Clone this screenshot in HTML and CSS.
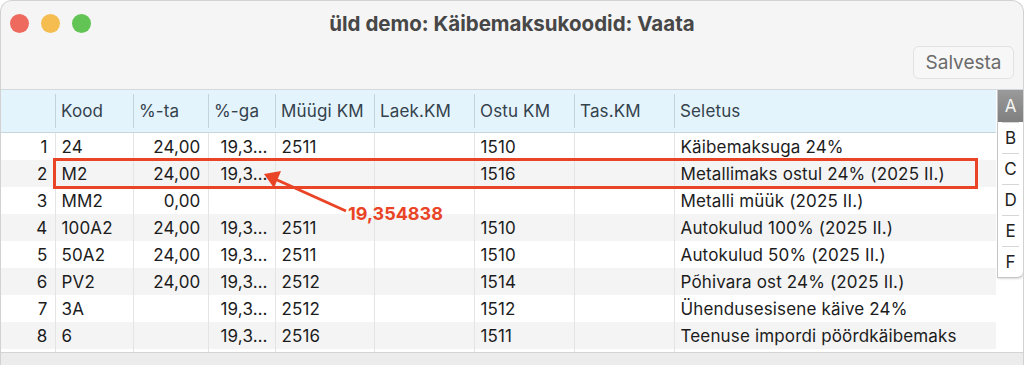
FILE: index.html
```html
<!DOCTYPE html>
<html lang="et">
<head>
  <meta charset="UTF-8">
  <title>üld demo: Käibemaksukoodid: Vaata</title>
  <link rel="stylesheet" href="styles.css">
</head>
<body>

  <div class="window">
    <!-- pealkirjariba -->
    <div class="titlebar">
      <div class="lights">
        <span class="light red"></span>
        <span class="light yellow"></span>
        <span class="light green"></span>
      </div>
      <div class="title">üld demo: Käibemaksukoodid: Vaata</div>
    </div>

    <!-- tööriistariba -->
    <div class="toolbar">
      <button class="save-btn">Salvesta</button>
    </div>

    <!-- tabel + tähed paremal -->
    <div class="content">
      <table class="grid">
        <colgroup>
          <col class="c-nr"><col class="c-kood"><col class="c-ta"><col class="c-ga">
          <col class="c-km"><col class="c-km2"><col class="c-km2"><col class="c-km2"><col>
        </colgroup>
        <thead>
          <tr>
            <th></th><th>Kood</th><th>%-ta</th><th>%-ga</th><th>Müügi KM</th>
            <th>Laek.KM</th><th>Ostu KM</th><th>Tas.KM</th><th>Seletus</th>
          </tr>
        </thead>
        <tbody>
          <tr><td class="nr">1</td><td>24</td><td class="num">24,00</td><td class="num">19,3…</td><td>2511</td><td></td><td>1510</td><td></td><td>Käibemaksuga 24%</td></tr>
          <tr><td class="nr">2</td><td>M2</td><td class="num">24,00</td><td class="num">19,3…</td><td></td><td></td><td>1516</td><td></td><td>Metallimaks ostul 24% (2025 II.)</td></tr>
          <tr><td class="nr">3</td><td>MM2</td><td class="num">0,00</td><td></td><td></td><td></td><td></td><td></td><td>Metalli müük (2025 II.)</td></tr>
          <tr><td class="nr">4</td><td>100A2</td><td class="num">24,00</td><td class="num">19,3…</td><td>2511</td><td></td><td>1510</td><td></td><td>Autokulud 100% (2025 II.)</td></tr>
          <tr><td class="nr">5</td><td>50A2</td><td class="num">24,00</td><td class="num">19,3…</td><td>2511</td><td></td><td>1510</td><td></td><td>Autokulud 50% (2025 II.)</td></tr>
          <tr><td class="nr">6</td><td>PV2</td><td class="num">24,00</td><td class="num">19,3…</td><td>2512</td><td></td><td>1514</td><td></td><td>Põhivara ost 24% (2025 II.)</td></tr>
          <tr><td class="nr">7</td><td>3A</td><td class="num"></td><td class="num">19,3…</td><td>2512</td><td></td><td>1512</td><td></td><td>Ühendusesisene käive 24%</td></tr>
          <tr><td class="nr">8</td><td>6</td><td class="num"></td><td class="num">19,3…</td><td>2516</td><td></td><td>1511</td><td></td><td>Teenuse impordi pöördkäibemaks</td></tr>
          <tr class="filler"><td></td><td></td><td></td><td></td><td></td><td></td><td></td><td></td><td></td></tr>
        </tbody>
      </table>

      <div class="tabs">
        <div class="tab active">A</div>
        <div class="tab">B</div>
        <div class="tab">C</div>
        <div class="tab">D</div>
        <div class="tab">E</div>
        <div class="tab">F</div>
      </div>
    </div>

    <div class="statusbar"></div>

    <!-- punane märge: kast, nool ja täisväärtus -->
    <svg class="note" width="1024" height="365" viewBox="0 0 1024 365">
      <rect x="54.5" y="159.5" width="922" height="28" fill="none" stroke="#ea4426" stroke-width="3"/>
      <line x1="346" y1="211" x2="275" y2="179" stroke="#ea4426" stroke-width="3"/>
      <polygon points="264,174 281,171 274,188" fill="#ea4426"/>
      <text x="348" y="220" class="note-text">19,354838</text>
    </svg>
  </div>

</body>
</html>
```

FILE: styles.css
```css
/* lehe põhi */
body {
  margin: 0;
  background: #fff;
  font-family: Inter, 'Liberation Sans', sans-serif;
  color: #1c1c1c;
}

/* aken */
.window {
  position: relative;
  width: 1024px;
  height: 365px;
  box-sizing: border-box;
  border: 1px solid #d2d2d2;
  border-bottom: none;
  border-radius: 12px 12px 0 0;
  background: #f5f5f5;
  overflow: hidden;
  display: flex;
  flex-direction: column;
}

.titlebar {
  height: 44px;
  display: flex;
  align-items: center;
  position: relative;
}

.lights {
  display: flex;
  gap: 12px;
  padding-left: 9px;
  padding-top: 1px;
}

.light {
  width: 19px;
  height: 19px;
  border-radius: 50%;
}

.red { background: #ee6a5f; }
.yellow { background: #f5bd4f; }
.green { background: #61c454; }

.title {
  position: absolute;
  left: 0;
  right: 0;
  text-align: center;
  font-size: 20.5px;
  font-weight: 700;
  color: #474747;
}

.toolbar {
  height: 44px;
  display: flex;
  justify-content: flex-end;
  align-items: flex-start;
  padding-right: 9px;
  border-bottom: 1px solid #d3d9dd;
}

.save-btn {
  margin-top: 1px;
  width: 101px;
  height: 33px;
  padding: 0;
  background: #f7f7f7;
  border: 1px solid #e2e2e2;
  border-radius: 6px;
  font-family: inherit;
  font-size: 19px;
  color: #6b6b6b;
}

/* tabel */
.content {
  display: flex;
  background: #fff;
  flex: 1;
  min-height: 0;
}

.grid {
  width: 996px;
  border-collapse: collapse;
  table-layout: fixed;
  font-size: 17px;
  letter-spacing: 0.15px;
  align-self: flex-start;
}

.c-nr { width: 54px; }
.c-kood { width: 78px; }
.c-ta { width: 75px; }
.c-ga { width: 67px; }
.c-km { width: 99px; }
.c-km2 { width: 100px; }

.grid th {
  height: 42px;
  padding: 0 6px;
  background: #e4f4fd;
  color: #34424c;
  font-weight: 400;
  text-align: left;
  white-space: nowrap;
  border-bottom: 1px solid #c9d5dc;
  background-image: linear-gradient(#c4d2db, #c4d2db);
  background-size: 1px 34px;
  background-position: left center;
  background-repeat: no-repeat;
}

.grid th:first-child {
  background-image: none;
}

.grid td {
  height: 27px;
  padding: 0 6px;
  white-space: nowrap;
  overflow: hidden;
  border-left: 1px solid #e4e4e4;
}

.grid td:first-child {
  border-left: none;
}

.grid tbody tr:nth-child(even) td {
  background: #f4f4f4;
}

.grid .filler td {
  height: 5px;
  background: #fff !important;
}

.grid .nr,
.grid .num {
  text-align: right;
  padding-right: 7px;
}

/* tähtede sakid */
.tabs {
  width: 25px;
  margin-left: 1px;
  align-self: flex-start;
  background: #fff;
  border-left: 1px solid #c6c6c6;
  border-bottom: 1px solid #c6c6c6;
  border-radius: 0 0 6px 0;
  box-shadow: 1px 1px 2px rgba(0, 0, 0, 0.15);
}

.tab {
  height: 31px;
  display: flex;
  align-items: center;
  justify-content: center;
  font-size: 17px;
  color: #222;
  position: relative;
}

.tab + .tab::before {
  content: '';
  position: absolute;
  top: 0;
  left: 4px;
  right: 4px;
  border-top: 1px solid #d6d6d6;
}

.tab.active {
  height: 32px;
  background: linear-gradient(#9a9a9a, #7f7f7f);
  color: #f4f4f4;
}

.statusbar {
  height: 12px;
  background: #ececec;
  border-top: 1px solid #d4d4d4;
}

/* märge */
.note {
  position: absolute;
  left: -1px;
  top: -1px;
  pointer-events: none;
}

.note-text {
  font-family: Inter, 'Liberation Sans', sans-serif;
  font-size: 18px;
  font-weight: 700;
  fill: #ea4426;
}
```
